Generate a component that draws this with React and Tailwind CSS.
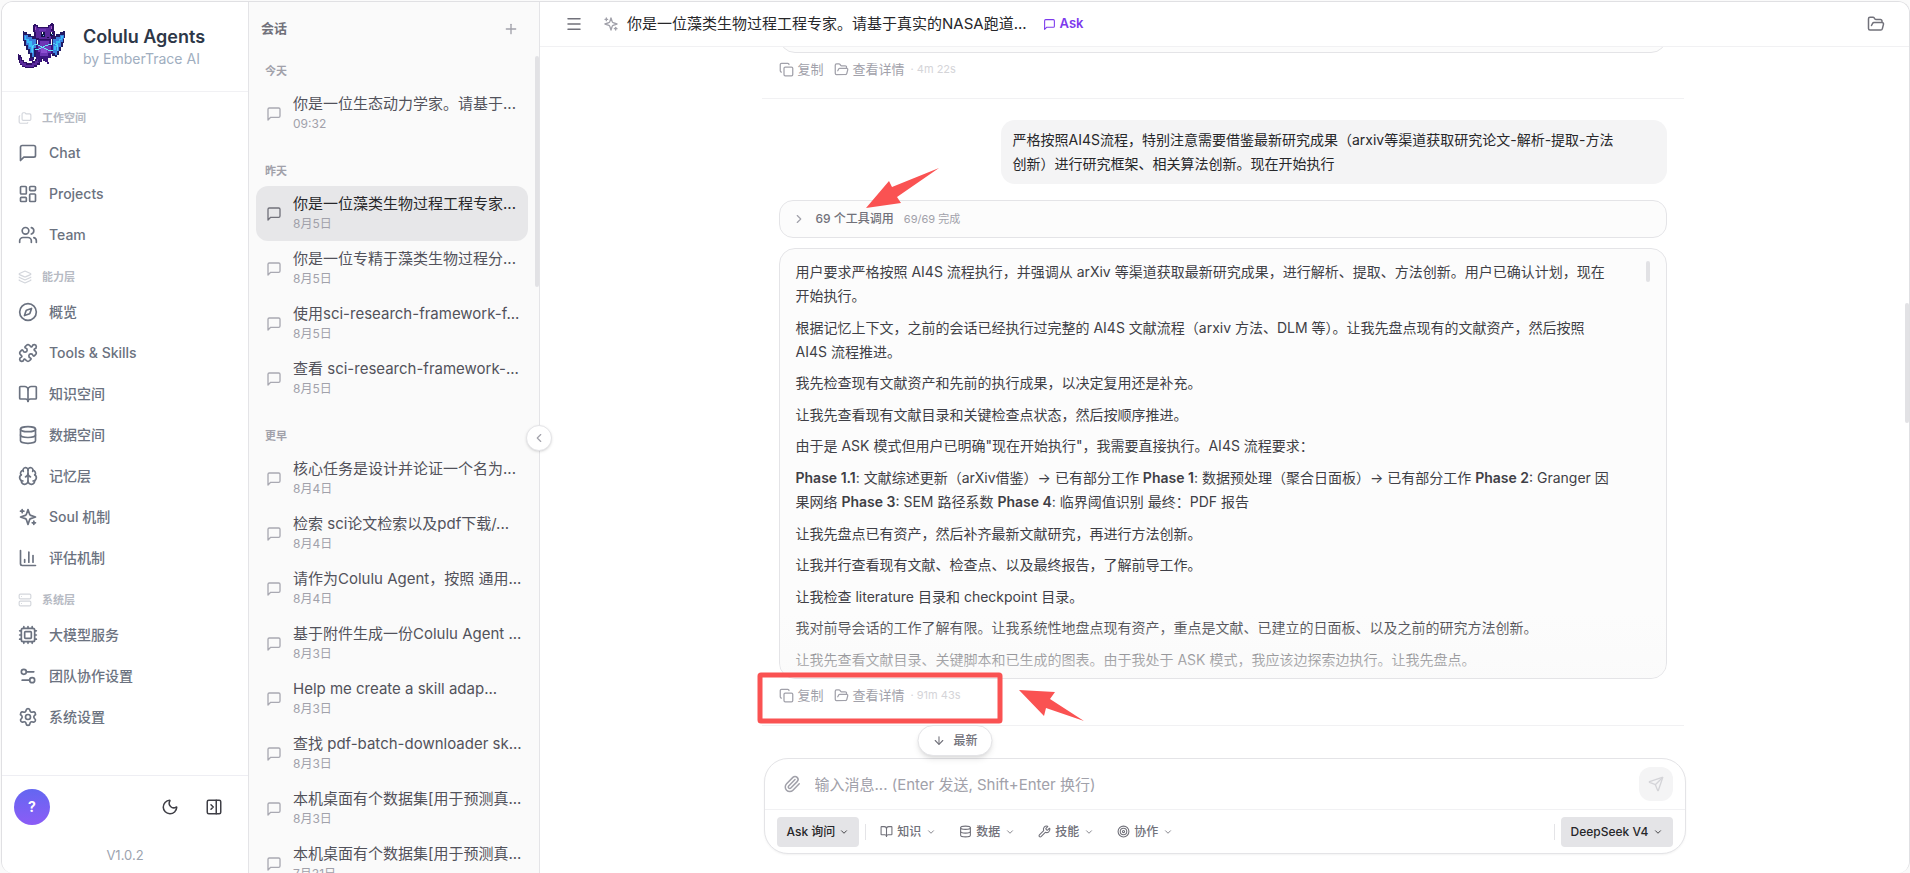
import React from "react";
import {
  ArrowDown,
  BookOpen,
  Brain,
  ChartColumn,
  ChevronDown,
  ChevronLeft,
  ChevronRight,
  Compass,
  Copy,
  Cpu,
  Database,
  FolderOpen,
  Folders,
  Layers,
  LayoutDashboard,
  Menu,
  Moon,
  PanelRightClose,
  Paperclip,
  Plus,
  Puzzle,
  Send,
  Server,
  Settings,
  Settings2,
  Target,
  Users,
  Wrench,
} from "lucide-react";

const ChatIcon = ({ size = 20, className = "" }) => (
  <svg
    width={size}
    height={size}
    viewBox="0 0 24 24"
    fill="none"
    stroke="currentColor"
    strokeWidth="2"
    strokeLinecap="round"
    strokeLinejoin="round"
    className={className}
  >
    <path d="M21 15a2 2 0 0 1-2 2H7l-4 4V5a2 2 0 0 1 2-2h14a2 2 0 0 1 2 2z" />
  </svg>
);

const SparklesIcon = ({ size = 20, className = "" }) => (
  <svg
    width={size}
    height={size}
    viewBox="0 0 24 24"
    fill="none"
    stroke="currentColor"
    strokeWidth="2"
    strokeLinecap="round"
    strokeLinejoin="round"
    className={className}
  >
    <path d="m12 3-1.912 5.813a2 2 0 0 1-1.275 1.275L3 12l5.813 1.912a2 2 0 0 1 1.275 1.275L12 21l1.912-5.813a2 2 0 0 1 1.275-1.275L21 12l-5.813-1.912a2 2 0 0 1-1.275-1.275L12 3Z" />
    <path d="M5 3v4" />
    <path d="M19 17v4" />
    <path d="M3 5h4" />
    <path d="M17 19h4" />
  </svg>
);

const navGroups = [
  {
    label: "工作空间",
    icon: Folders,
    items: [
      { label: "Chat", icon: ChatIcon },
      { label: "Projects", icon: LayoutDashboard },
      { label: "Team", icon: Users },
    ],
  },
  {
    label: "能力层",
    icon: Layers,
    items: [
      { label: "概览", icon: Compass },
      { label: "Tools & Skills", icon: Puzzle },
      { label: "知识空间", icon: BookOpen },
      { label: "数据空间", icon: Database },
      { label: "记忆层", icon: Brain },
      { label: "Soul 机制", icon: SparklesIcon },
      { label: "评估机制", icon: ChartColumn },
    ],
  },
  {
    label: "系统层",
    icon: Server,
    items: [
      { label: "大模型服务", icon: Cpu },
      { label: "团队协作设置", icon: Settings2 },
      { label: "系统设置", icon: Settings },
    ],
  },
];

const sessionGroups = [
  {
    label: "今天",
    items: [{ title: "你是一位生态动力学家。请基于...", date: "09:32" }],
  },
  {
    label: "昨天",
    items: [
      { title: "你是一位藻类生物过程工程专家...", date: "8月5日", active: true },
      { title: "你是一位专精于藻类生物过程分...", date: "8月5日" },
      { title: "使用sci-research-framework-f...", date: "8月5日" },
      { title: "查看 sci-research-framework-...", date: "8月5日" },
    ],
  },
  {
    label: "更早",
    items: [
      { title: "核心任务是设计并论证一个名为...", date: "8月4日" },
      { title: "检索 sci论文检索以及pdf下载/...", date: "8月4日" },
      { title: "请作为Colulu Agent，按照 通用...", date: "8月4日" },
      { title: "基于附件生成一份Colulu Agent ...", date: "8月3日" },
      { title: "Help me create a skill adap...", date: "8月3日" },
      { title: "查找 pdf-batch-downloader sk...", date: "8月3日" },
      { title: "本机桌面有个数据集[用于预测真...", date: "8月3日" },
      { title: "本机桌面有个数据集[用于预测真...", date: "7月31日" },
    ],
  },
];

const tools = [
  { label: "知识", icon: BookOpen },
  { label: "数据", icon: Database },
  { label: "技能", icon: Wrench },
  { label: "协作", icon: Target },
];

const Logo = () => (
  <svg width="56" height="54" viewBox="0 0 56 54" shapeRendering="crispEdges" className="shrink-0">
    {/* tail */}
    <path
      d="M5 35h2v2h1v3h2v2h3v1h5v-2h3v-2h2v-3h7v3h-2v3h-2v3h-3v2h-3v1h-9v-1H8v-2H6v-2H5v-3H4v-6h1z"
      fill="#2e1065"
    />
    <path d="M6 38h1v3h2v2h3v2h6v-2h3v-2h2v-2h4v2h-2v2h-2v2h-3v2H11v-1H8v-2H6z" fill="#5b2a9e" />
    {/* wings */}
    <path
      d="M9 11h1v1h3v2h4v2h6v21h-3v3h-2v-2h-2v-4h-2v-4h-2v-4h-2v-5H9z"
      fill="#221a63"
    />
    <path
      d="M51 11h-2v1h-3v2h-4v2h-4v20h3v1h2v-2h2v-4h2v-4h2v-4h1v-5h1z"
      fill="#221a63"
    />
    <path d="M10 15h4v2h4v2h4v9h-2v9h-2v-4h-2v-4h-2v-4h-2v-5h-2z" fill="#3b82e0" />
    <path d="M50 15h-4v2h-4v2h-3v14h2v2h2v-4h2v-4h2v-5h2v-3h1z" fill="#3b82e0" />
    <path d="M11 16h1v3h3v2h3v4h2v3h-2v4h-1v-5h-2v-4h-2v-3h-2z" fill="#38bdf8" />
    <path d="M49 16h-2v3h-2v2h-3v5h-2v4h2v-3h2v-4h2v-3h2z" fill="#38bdf8" />
    {/* ears and head */}
    <path d="M20 4h2v1h2v2h10v-2h2V4h1V3h2v1h1v7h1v6h-2v2h-2v2H24v-1h-2v-2h-2v-6h-1V5h1z" fill="#2e1065" />
    <path d="M21 6h2v2h12V6h2v5h2v5h-2v3H25v-1h-3v-6h-1z" fill="#5b2a9e" />
    <path d="M21 7h1v3h-1zM37 6h1v3h-1z" fill="#a855c8" />
    <path d="M25 9h7v2h-7z" fill="#6d35b5" />
    <path d="M27 12h4v5h-4zM36 12h3v4h-3z" fill="#111247" />
    <path d="M28 12h1v2h-1zM37 12h1v2h-1z" fill="#ffffff" />
    <path d="M29 15h1v1h-1zM38 14h1v1h-1z" fill="#67b7f7" />
    <path d="M33 17h2v1h-2z" fill="#1e1048" />
    {/* body */}
    <path d="M24 20h13v5h2v9h-2v4h-3v4h1v2h-2v-2h-2v-4h-4v4h-3v-3h-2V25h2z" fill="#3b1580" />
    <path d="M26 21h9v5h2v7h-3v3h-8v-4h-2v-6h2z" fill="#6d35b5" />
    <path d="M27 28h6v5h-6z" fill="#8b4fd0" />
    <path d="M15 38h4v3h-4zM29 38h3v3h-3z" fill="#3b1580" />
    {/* glowing threads */}
    <g fill="none" stroke="#67e8f9" strokeWidth="1">
      <path d="M21 24l3 1 6 3 6 3 3-1M21 30l4-1 6-3 6-2" />
      <path d="M18 33v-6l3-3M43 31v-6l-4-2" strokeOpacity="0.7" />
    </g>
  </svg>
);

const Sidebar = () => (
  <aside className="w-[247px] shrink-0 flex flex-col border-r border-[#e4e4e7] bg-white">
    <div className="h-[90px] shrink-0 flex items-center gap-[13px] pl-3 border-b border-[#f1f1f4]">
      <Logo />
      <div>
        <h1 className="text-lg leading-6 font-semibold text-[#2d3748]">Colulu Agents</h1>
        <p className="text-sm leading-5 text-[#a0aec0]">by EmberTrace AI</p>
      </div>
    </div>

    <nav className="flex-1 min-h-0 overflow-hidden pt-4">
      {navGroups.map(({ label, icon: GroupIcon, items }) => (
        <section key={label} className="pb-3">
          <div className="flex items-center gap-[10px] h-5 pl-4 mb-1 text-[11px] font-semibold text-[#b6bac3]">
            <GroupIcon size={14} className="text-[#d3d6dc]" />
            <h2>{label}</h2>
          </div>
          <ul>
            {items.map(({ label, icon: Icon }) => (
              <li key={label}>
                <a href="#" className="flex items-center gap-[11px] h-[41px] pl-4 text-sm font-medium text-[#6b7280]">
                  <Icon size={20} />
                  {label}
                </a>
              </li>
            ))}
          </ul>
        </section>
      ))}
    </nav>

    <div className="shrink-0 border-t border-[#eeeef3] h-[98px] px-3 pt-[13px]">
      <div className="flex items-center">
        <button className="w-9 h-9 rounded-full bg-linear-to-b from-[#6366f1] to-[#8b5cf6] text-white text-sm font-bold">
          ?
        </button>
        <button aria-label="深色模式" className="ml-auto w-9 h-9 grid place-items-center text-[#3f3f46]">
          <Moon size={18} />
        </button>
        <button aria-label="收起侧栏" className="ml-2 mr-1 w-9 h-9 grid place-items-center text-[#3f3f46]">
          <PanelRightClose size={18} />
        </button>
      </div>
      <p className="mt-5 text-center text-[13px] leading-5 text-[#9ca3af]">V1.0.2</p>
    </div>
  </aside>
);

const SessionPanel = () => (
  <aside className="relative w-[291px] shrink-0 flex flex-col border-r border-[#e4e4e7] bg-[#fafafa]">
    <header className="shrink-0 h-[54px] flex items-center justify-between pl-3 pr-5">
      <h2 className="text-[13px] font-semibold text-[#71717a]">会话</h2>
      <button aria-label="新建会话" className="text-[#a1a1aa]">
        <Plus size={16} />
      </button>
    </header>

    <div className="relative flex-1 min-h-0 overflow-hidden px-[7px] pt-[7px]">
      {sessionGroups.map((group) => (
        <section key={group.label} className="mb-[22px]">
          <h3 className="pl-[9px] mb-[7px] text-[11px] leading-4 font-semibold text-[#a1a1aa]">{group.label}</h3>
          <ul>
            {group.items.map((item, i) => (
              <li key={i} className="pr-1">
                <button
                  className={`w-full h-[55px] flex items-center gap-[11px] pl-[10px] rounded-xl text-left ${
                    item.active ? "bg-[#e7e7e9] text-[#27272a]" : "text-[#52525b]"
                  }`}
                >
                  <ChatIcon
                    size={16}
                    className={item.active ? "shrink-0 text-[#71717a]" : "shrink-0 text-[#a9a9b2]"}
                  />
                  <span className="min-w-0">
                    <span className="block text-[15px] leading-5 whitespace-nowrap">{item.title}</span>
                    <span className="block text-xs leading-5 text-[#a1a1aa]">{item.date}</span>
                  </span>
                </button>
              </li>
            ))}
          </ul>
        </section>
      ))}
      <div className="absolute top-0 right-0 w-1 h-[231px] rounded-full bg-[#e2e2e5]" />
    </div>

    <button
      aria-label="收起会话列表"
      className="absolute z-10 top-1/2 -right-[13px] -translate-y-1/2 w-[26px] h-[26px] rounded-full border border-[#e4e4e7] bg-white shadow-sm grid place-items-center text-[#a1a1aa]"
    >
      <ChevronLeft size={14} />
    </button>
  </aside>
);

const MessageActions = ({ duration }) => (
  <div className="flex items-center h-5 gap-[10px] text-[13px] leading-5 text-[#a1a1aa]">
    <button className="flex items-center gap-1">
      <Copy size={15} />
      复制
    </button>
    <button className="flex items-center gap-1">
      <FolderOpen size={15} />
      查看详情
    </button>
    <span className="-ml-1 text-[11px] text-[#d4d4d8]">· {duration}</span>
  </div>
);

const Answer = () => (
  <div className="relative mt-[10px] h-[431px] rounded-[16px] border border-[#e4e4e7] bg-[#fcfcfc] overflow-hidden">
    <div className="h-full px-4 pt-[11px] pb-[6px] flex flex-col justify-between text-sm leading-6 text-[#3f3f46]">
      <p>
        用户要求严格按照 AI4S 流程执行，并强调从 arXiv 等渠道获取最新研究成果，进行解析、提取、方法创新。用户已确认计划，现在
        <br />
        开始执行。
      </p>
      <p>
        根据记忆上下文，之前的会话已经执行过完整的 AI4S 文献流程（arxiv 方法、DLM 等）。让我先盘点现有的文献资产，然后按照
        <br />
        AI4S 流程推进。
      </p>
      <p>我先检查现有文献资产和先前的执行成果，以决定复用还是补充。</p>
      <p>让我先查看现有文献目录和关键检查点状态，然后按顺序推进。</p>
      <p>由于是 ASK 模式但用户已明确"现在开始执行"，我需要直接执行。AI4S 流程要求：</p>
      <p>
        <strong className="font-semibold">Phase 1.1</strong>: 文献综述更新（arXiv借鉴）→ 已有部分工作{" "}
        <strong className="font-semibold">Phase 1</strong>: 数据预处理（聚合日面板）→ 已有部分工作{" "}
        <strong className="font-semibold">Phase 2</strong>: Granger 因
        <br />
        果网络 <strong className="font-semibold">Phase 3</strong>: SEM 路径系数{" "}
        <strong className="font-semibold">Phase 4</strong>: 临界阈值识别 最终：PDF 报告
      </p>
      <p>让我先盘点已有资产，然后补齐最新文献研究，再进行方法创新。</p>
      <p>让我并行查看现有文献、检查点、以及最终报告，了解前导工作。</p>
      <p>让我检查 literature 目录和 checkpoint 目录。</p>
      <p>我对前导会话的工作了解有限。让我系统性地盘点现有资产，重点是文献、已建立的日面板、以及之前的研究方法创新。</p>
      <p>让我先查看文献目录、关键脚本和已生成的图表。由于我处于 ASK 模式，我应该边探索边执行。让我先盘点。</p>
    </div>
    <div className="absolute inset-x-0 bottom-0 h-16 bg-linear-to-t from-[#fafafa]/75 to-transparent" />
    <div className="absolute top-3 right-4 w-1 h-[21px] rounded-full bg-[#e2e2e5]" />
  </div>
);

const Composer = () => (
  <div className="relative shrink-0 px-6 pb-[19px]">
    <form className="mx-auto w-full max-w-[922px] rounded-[24px] border border-[#e4e4e7] bg-white shadow-xs">
      <div className="flex items-center h-[51px] pl-[18px] pr-3 border-b border-[#f1f1f3]">
        <button type="button" aria-label="附件" className="text-[#a1a1aa]">
          <Paperclip size={18} />
        </button>
        <input
          type="text"
          aria-label="消息"
          placeholder="输入消息... (Enter 发送, Shift+Enter 换行)"
          className="flex-1 min-w-0 ml-[14px] pt-[2px] text-[15px] outline-none placeholder:text-[#a1a1aa]"
        />
        <button
          type="button"
          aria-label="发送"
          className="w-[34px] h-[34px] rounded-xl bg-[#f4f4f5] grid place-items-center text-[#d4d4d8]"
        >
          <Send size={16} />
        </button>
      </div>
      <div className="flex items-center h-[43px] px-3 text-xs font-medium text-[#71717a]">
        <button
          type="button"
          className="flex items-center gap-1 h-[30px] px-[10px] rounded bg-[#e4e4e7] text-[#27272a]"
        >
          Ask 询问
          <ChevronDown size={10} />
        </button>
        <span className="ml-[6px] mr-[6px] w-px h-4 bg-[#e4e4e7]" />
        {tools.map(({ label, icon: Icon }) => (
          <button key={label} type="button" className="flex items-center w-[79px] h-[30px] pl-2">
            <Icon size={13} className="mr-1" />
            {label}
            <ChevronDown size={10} className="ml-[5px]" />
          </button>
        ))}
        <span className="ml-auto mr-[6px] w-px h-4 bg-[#e4e4e7]" />
        <button
          type="button"
          className="flex items-center gap-1 h-[30px] px-[10px] rounded bg-[#e4e4e7] text-[#27272a]"
        >
          DeepSeek V4
          <ChevronDown size={10} />
        </button>
      </div>
    </form>
  </div>
);

const Annotations = () => (
  <div className="absolute inset-0 z-20 pointer-events-none">
    <svg width="1100" height="740" viewBox="0 0 1100 740" className="absolute top-0 left-0" fill="#fa5252">
      <path d="M939 168 897 197 901 203 866 208 889 181 892 187Z" />
      <path d="M1084 721 1046 708 1044 716 1019 690 1055 692 1050 699Z" />
      <rect x="760" y="675" width="240" height="46" rx="1" fill="none" stroke="#fa5252" strokeWidth="5" />
    </svg>
  </div>
);

const Main = () => (
  <main className="relative flex-1 min-w-0 flex flex-col bg-white">
    <header className="shrink-0 h-[45px] flex items-center pl-[25px] pr-6 border-b border-[#f1f1f3]">
      <button aria-label="菜单" className="text-[#71717a]">
        <Menu size={18} />
      </button>
      <SparklesIcon size={16} className="ml-5 text-[#a1a1aa]" />
      <h2 className="ml-2 text-[15px] text-[#27272a]">
        你是一位藻类生物过程工程专家。请基于真实的NASA跑道...
      </h2>
      <span className="ml-4 flex items-center gap-1 text-[13px] font-semibold text-[#7c3aed]">
        <ChatIcon size={13} />
        Ask
      </span>
      <button aria-label="文件" className="ml-auto text-[#71717a]">
        <FolderOpen size={18} />
      </button>
    </header>

    <div className="flex-1 min-h-0 overflow-hidden pl-6 pr-[28px]">
      <div className="mx-auto w-full max-w-[922px]">
        <div className="px-[17px]">
          <div className="h-[6px] flex items-end overflow-hidden">
            <div className="h-10 w-full shrink-0 rounded-[16px] border border-[#e4e4e7] bg-[#fcfcfc]" />
          </div>
          <div className="mt-[6px]">
            <MessageActions duration="4m 22s" />
          </div>
        </div>
        <hr className="mt-[19px] border-[#f1f1f3]" />
        <div className="px-[17px] pt-[21px]">
          <div className="ml-auto w-3/4 rounded-[14px] bg-[#f4f4f5] px-3 py-2 text-sm leading-6 text-[#27272a]">
            严格按照AI4S流程，特别注意需要借鉴最新研究成果（arxiv等渠道获取研究论文-解析-提取-方法
            <br />
            创新）进行研究框架、相关算法创新。现在开始执行
          </div>
          <button className="mt-4 w-full h-[38px] flex items-center px-3 rounded-[14px] border border-[#e4e4e7] bg-[#fcfcfc]">
            <ChevronRight size={14} className="text-[#a1a1aa]" />
            <span className="ml-[10px] text-xs font-medium text-[#71717a]">69 个工具调用</span>
            <span className="ml-[10px] text-[11px] text-[#a1a1aa]">69/69 完成</span>
          </button>
          <Answer />
          <div className="mt-[6px]">
            <MessageActions duration="91m 43s" />
          </div>
        </div>
        <hr className="mt-5 border-[#f1f1f3]" />
      </div>
    </div>

    <Composer />
    <div className="absolute right-0 top-[301px] w-1 h-[120px] rounded-full bg-[#e2e2e5]" />
  </main>
);

const App = () => (
  <div className="relative h-screen overflow-hidden bg-[#fafafa] pt-px pl-px font-['Inter','Noto_Sans_CJK_SC',sans-serif]">
    <div className="h-full flex overflow-hidden rounded-xl border border-b-0 border-[#e0e0e3]">
      <Sidebar />
      <SessionPanel />
      <Main />
    </div>
    <button className="absolute z-10 left-1/2 -translate-x-1/2 bottom-[117px] h-[31px] px-[14px] flex items-center gap-2 rounded-full border border-[#e4e4e7] bg-white shadow-md text-xs font-medium text-[#71717a]">
      <ArrowDown size={13} />
      最新
    </button>
    <Annotations />
  </div>
);

export default App;
